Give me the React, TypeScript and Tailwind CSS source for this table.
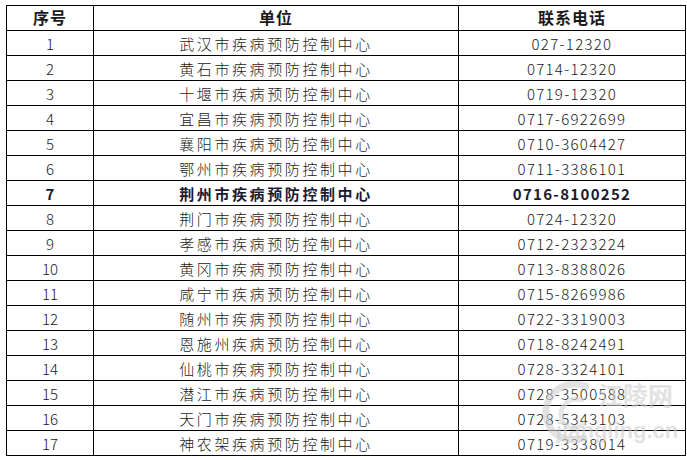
import React from 'react';

const rows: [string, string][] = [
  ['武汉市疾病预防控制中心', '027-12320'],
  ['黄石市疾病预防控制中心', '0714-12320'],
  ['十堰市疾病预防控制中心', '0719-12320'],
  ['宜昌市疾病预防控制中心', '0717-6922699'],
  ['襄阳市疾病预防控制中心', '0710-3604427'],
  ['鄂州市疾病预防控制中心', '0711-3386101'],
  ['荆州市疾病预防控制中心', '0716-8100252'],
  ['荆门市疾病预防控制中心', '0724-12320'],
  ['孝感市疾病预防控制中心', '0712-2323224'],
  ['黄冈市疾病预防控制中心', '0713-8388026'],
  ['咸宁市疾病预防控制中心', '0715-8269986'],
  ['随州市疾病预防控制中心', '0722-3319003'],
  ['恩施州疾病预防控制中心', '0718-8242491'],
  ['仙桃市疾病预防控制中心', '0728-3324101'],
  ['潜江市疾病预防控制中心', '0728-3500588'],
  ['天门市疾病预防控制中心', '0728-5343103'],
  ['神农架疾病预防控制中心', '0719-3338014'],
];

const cjk = "font-['Noto_Sans_CJK_SC',sans-serif]";

function Watermark() {
  return (
    <div className="pointer-events-none absolute left-[540px] top-[376px] w-[145px] h-[76px]">
      <svg width="60" height="72" viewBox="0 0 60 72" className="absolute left-0 top-0 opacity-60">
        <path d="M46 10 C20 2 2 22 7 44 C11 60 28 68 44 62" fill="none" stroke="#cfcfcf" strokeWidth="7" strokeLinecap="round" />
        <path d="M42 24 C28 20 18 32 22 44 C25 52 36 54 44 48" fill="none" stroke="#d8d8d8" strokeWidth="5" strokeLinecap="round" />
      </svg>
      <div className={`absolute left-[58px] top-[6px] whitespace-nowrap text-[25px] leading-none font-bold text-[#cfcfcf] opacity-60 ${cjk}`}>
        江陵网
      </div>
      <div className="absolute left-[16px] top-[44px] whitespace-nowrap text-[22px] leading-none font-bold text-[#cfcfcf] opacity-60 font-['Liberation_Sans',sans-serif]">
        jiangling.cn
      </div>
    </div>
  );
}

export default function App() {
  return (
    <div className="relative w-[687px] h-[460px] bg-white pl-[6px] pt-[5px]">
      <table className={`border-collapse w-[679px] table-fixed text-[#1a1a1a] ${cjk}`}>
        <colgroup>
          <col className="w-[87px]" />
          <col className="w-[365px]" />
          <col className="w-[227px]" />
        </colgroup>
        <thead>
          <tr className="h-[25px]">
            <th className="border border-black pb-[2px] text-[16px] font-bold tracking-[1px] leading-none">序号</th>
            <th className="border border-black pb-[2px] text-[16px] font-bold tracking-[1px] leading-none">单位</th>
            <th className="border border-black pb-[2px] text-[16px] font-bold tracking-[1px] leading-none">联系电话</th>
          </tr>
        </thead>
        <tbody>
          {rows.map(([name, phone], i) => {
            const bold = i === 6;
            const weight = bold ? 'font-bold text-[#1a1a33]' : 'font-light';
            return (
              <tr key={i} className="h-[25px]">
                <td className={`border border-black text-center text-[15px] leading-none ${weight}`}>
                  {i + 1}
                </td>
                <td className={`border border-black text-center text-[15px] leading-none tracking-[2.6px] ${weight}`}>
                  {name}
                </td>
                <td className={`border border-black text-center text-[15px] leading-none tracking-[1.3px] tabular-nums ${weight}`}>
                  {phone}
                </td>
              </tr>
            );
          })}
        </tbody>
      </table>
      <Watermark />
    </div>
  );
}
